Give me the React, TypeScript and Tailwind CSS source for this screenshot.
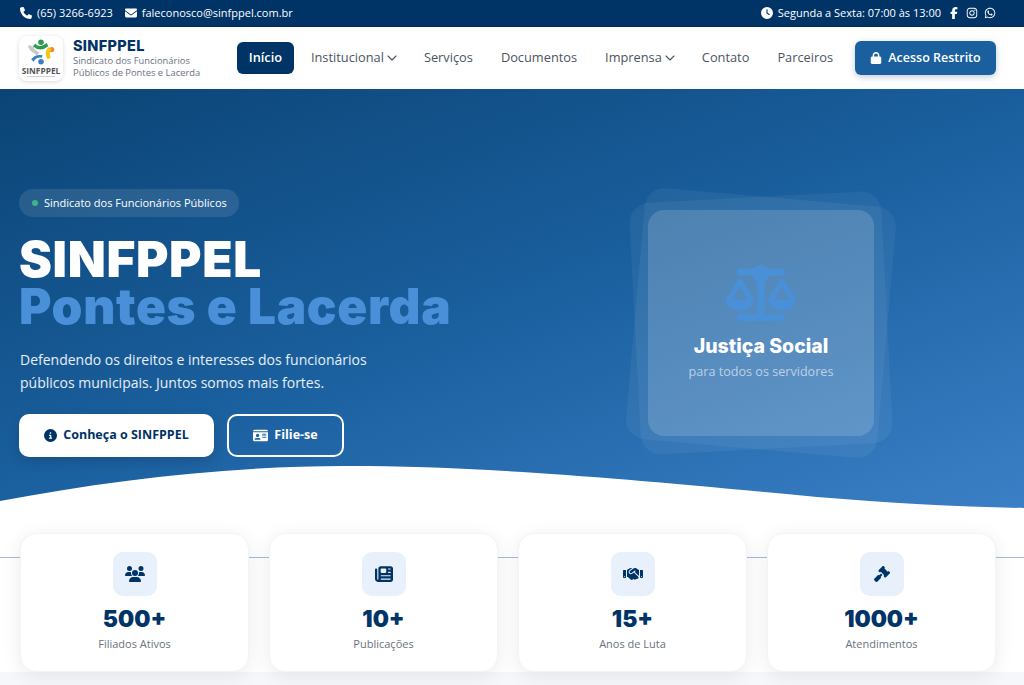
import {
  FaPhone,
  FaEnvelope,
  FaClock,
  FaFacebookF,
  FaInstagram,
  FaWhatsapp,
  FaLock,
  FaCircleInfo,
  FaIdCard,
  FaScaleBalanced,
  FaUsers,
  FaNewspaper,
  FaHandshake,
  FaGavel,
} from "react-icons/fa6";
import { ChevronDown } from "lucide-react";

const navItems = [
  { label: "Institucional", caret: true },
  { label: "Serviços" },
  { label: "Documentos" },
  { label: "Imprensa", caret: true },
  { label: "Contato" },
  { label: "Parceiros" },
];

const stats = [
  { icon: FaUsers, size: "w-[20px] h-[16px]", value: "500+", label: "Filiados Ativos" },
  { icon: FaNewspaper, size: "w-[18px] h-[18px]", value: "10+", label: "Publicações" },
  { icon: FaHandshake, size: "w-[20px] h-[16px]", value: "15+", label: "Anos de Luta" },
  { icon: FaGavel, size: "w-[16px] h-[16px]", value: "1000+", label: "Atendimentos" },
];

function Logo() {
  return (
    <div className="w-[44px] h-[45px] -ml-px rounded-lg bg-white shadow-[0_1px_4px_rgba(0,0,0,0.15)] flex flex-col items-center pt-[2px] overflow-hidden">
      <svg viewBox="0 0 44 32" className="w-[36px] h-[28px]">
        <circle cx="22" cy="4" r="3.4" fill="#2e9b4f" />
        <path d="M15 6 Q21 12 29 5 L31 9 Q21 17 12 9 Z" fill="#2e9b4f" />
        <circle cx="11" cy="12" r="3" fill="#c8c8c8" />
        <path d="M8 7 Q14 13 20 17 L17 20 Q10 16 6 10 Z" fill="#c8c8c8" />
        <circle cx="35" cy="13" r="3.2" fill="#f08a24" />
        <path d="M31 10 Q25 17 30 25 L34 23 Q31 17 35 13 Z" fill="#f5c518" />
        <path d="M10 25 Q15 18 24 20 L23 23 Q16 22 13 28 Z" fill="#3a7fc4" />
        <circle cx="22" cy="28" r="3.4" fill="#3a7fc4" />
      </svg>
      <span className="text-[8.4px] leading-[9px] font-bold text-[#555]">SINFPPEL</span>
      <span className="mt-px w-[28px] h-px bg-[#d4d4d4]" />
    </div>
  );
}

export default function App() {
  return (
    <div className="font-['Open_Sans',sans-serif] bg-white overflow-hidden">
      {/* barra superior */}
      <div className="h-[27px] bg-[#003366] border-b border-[#002a55] text-white text-[11px] pl-5 pr-7 flex items-center justify-between">
        <div className="flex items-center gap-[12px]">
          <span className="flex items-center gap-[5px]">
            <FaPhone className="text-[12px]" /> (65) 3266-6923
          </span>
          <span className="flex items-center gap-[5px]">
            <FaEnvelope className="text-[12px]" /> faleconosco@sinfppel.com.br
          </span>
        </div>
        <div className="flex items-center gap-[6px]">
          <span className="flex items-center gap-[5px] mr-[1px]">
            <FaClock className="text-[12px]" /> Segunda a Sexta: 07:00 às 13:00
          </span>
          <FaFacebookF className="text-[12px]" />
          <FaInstagram className="text-[12px]" />
          <FaWhatsapp className="text-[12px]" />
        </div>
      </div>

      {/* navegação */}
      <div className="h-[62px] bg-white pl-5 pr-7 flex items-center justify-between">
        <div className="flex items-center gap-[10px]">
          <Logo />
          <div className="whitespace-nowrap">
            <div className="font-['Inter',sans-serif] font-extrabold text-[14.5px] leading-[16px] mb-px tracking-[0.3px] text-[#003366]">
              SINFPPEL
            </div>
            <div className="text-[9.4px] leading-[12px] text-[#6b7280]">
              Sindicato dos Funcionários
              <br />
              Públicos de Pontes e Lacerda
            </div>
          </div>
        </div>
        <div className="flex items-center gap-[2px]">
          <a className="h-[32px] w-[57px] mr-[2px] rounded-md bg-[#003366] text-white text-[12.8px] font-semibold flex items-center justify-center">
            Início
          </a>
          {navItems.map((item) => (
            <a
              key={item.label}
              className="h-[32px] px-[13px] text-[#4b5563] text-[12.8px] font-medium flex items-center"
            >
              {item.label}
              {item.caret && <ChevronDown className="w-[16px] h-[16px] -mr-[4px]" strokeWidth={1.6} />}
            </a>
          ))}
          <a className="h-[34px] w-[141px] ml-[7px] rounded-md bg-[#1a5f9e] text-white text-[12.5px] font-semibold flex items-center justify-center gap-[6px] shadow-[0_2px_6px_rgba(0,51,102,0.25)]">
            <FaLock className="text-[12px]" /> Acesso Restrito
          </a>
        </div>
      </div>

      {/* hero */}
      <section className="relative h-[421px] pl-5 pr-7 pt-[100px] bg-[linear-gradient(160deg,#0b4475_0%,#1a5f9e_50%,#3b80c6_100%)] flex justify-between overflow-hidden">
        <div className="relative z-10">
          <div className="w-[220px] h-[28px] -ml-px rounded-full bg-white/10 text-white text-[11px] flex items-center pl-[13px]">
            <span className="w-[6px] h-[6px] rounded-full bg-[#3fb57f] mr-[6px]" />
            Sindicato dos Funcionários Públicos
          </div>
          <h1 className="mt-[19px] -ml-px font-['Inter',sans-serif] font-black text-[49.5px] leading-[47px] text-white tracking-[0.65px]">
            SINFPPEL
            <br />
            <span className="text-[#4a90d9]">Pontes e Lacerda</span>
          </h1>
          <p className="mt-[18px] text-[14px] leading-[23px] text-white/90">
            Defendendo os direitos e interesses dos funcionários
            <br />
            públicos municipais. Juntos somos mais fortes.
          </p>
          <div className="mt-[20px] flex gap-[13px]">
            <a className="w-[195px] h-[43px] -ml-px rounded-[10px] bg-white text-[#003366] text-[12.5px] font-bold flex items-center justify-center gap-[6px] shadow-[0_4px_12px_rgba(0,0,0,0.15)]">
              <FaCircleInfo className="text-[13px]" /> Conheça o SINFPPEL
            </a>
            <a className="w-[117px] h-[43px] rounded-[10px] border-2 border-white text-white text-[12.5px] font-bold flex items-center justify-center gap-[6px]">
              <FaIdCard className="text-[15px]" /> Filie-se
            </a>
          </div>
        </div>

        <div className="relative w-[226px] h-[226px] mt-[21px] mr-[122px] rounded-2xl bg-white/15 flex flex-col items-center justify-center text-center">
          <div className="absolute left-1/2 top-1/2 -ml-[126px] -mt-[126px] w-[252px] h-[252px] rounded-[20px] bg-white/5 rotate-[5deg]" />
          <div className="absolute left-1/2 top-1/2 -ml-[126px] -mt-[126px] w-[252px] h-[252px] rounded-[20px] bg-white/5 -rotate-[3deg]" />
          <FaScaleBalanced className="relative w-[70px] h-[56px] text-[#4a90d9]" />
          <div className="relative mt-[11px] font-['Inter',sans-serif] font-extrabold text-[19.5px] leading-[28px] text-white">
            Justiça Social
          </div>
          <div className="relative mt-[2px] text-[12.6px] leading-[20px] text-white/60">
            para todos os servidores
          </div>
        </div>

        <svg
          viewBox="0 0 1024 50"
          preserveAspectRatio="none"
          className="absolute left-0 bottom-0 w-full h-[50px]"
        >
          <path
            d="M0 41 C110 20 230 6 346 6 C480 6 620 18 817 37 C890 43 960 47 1024 48 L1024 50 L0 50 Z"
            fill="#ffffff"
          />
        </svg>
      </section>

      {/* números */}
      <section className="relative pl-5 pr-7 pt-[23px] h-[162px] bg-white">
        <div className="absolute left-0 right-0 top-[47px] h-px bg-[#9dbde0]" />
        <div className="relative grid grid-cols-4 gap-5">
          {stats.map((s) => (
            <div
              key={s.label}
              className="h-[139px] rounded-2xl bg-white border border-[#f3f4f6] shadow-[0_4px_20px_rgba(0,0,0,0.08)] flex flex-col items-center pt-[18px]"
            >
              <div className="w-[44px] h-[44px] rounded-[10px] bg-[#e8f0fc] flex items-center justify-center text-[#003366]">
                <s.icon className={s.size} />
              </div>
              <div className="mt-[7px] font-['Inter',sans-serif] font-black text-[22.8px] leading-[32px] text-[#003366]">
                {s.value}
              </div>
              <div className="-mt-px text-[11px] leading-[20px] text-[#6b7280]">{s.label}</div>
            </div>
          ))}
        </div>
      </section>
      <div className="h-[20px] bg-[#f5f7fa]" />
    </div>
  );
}
